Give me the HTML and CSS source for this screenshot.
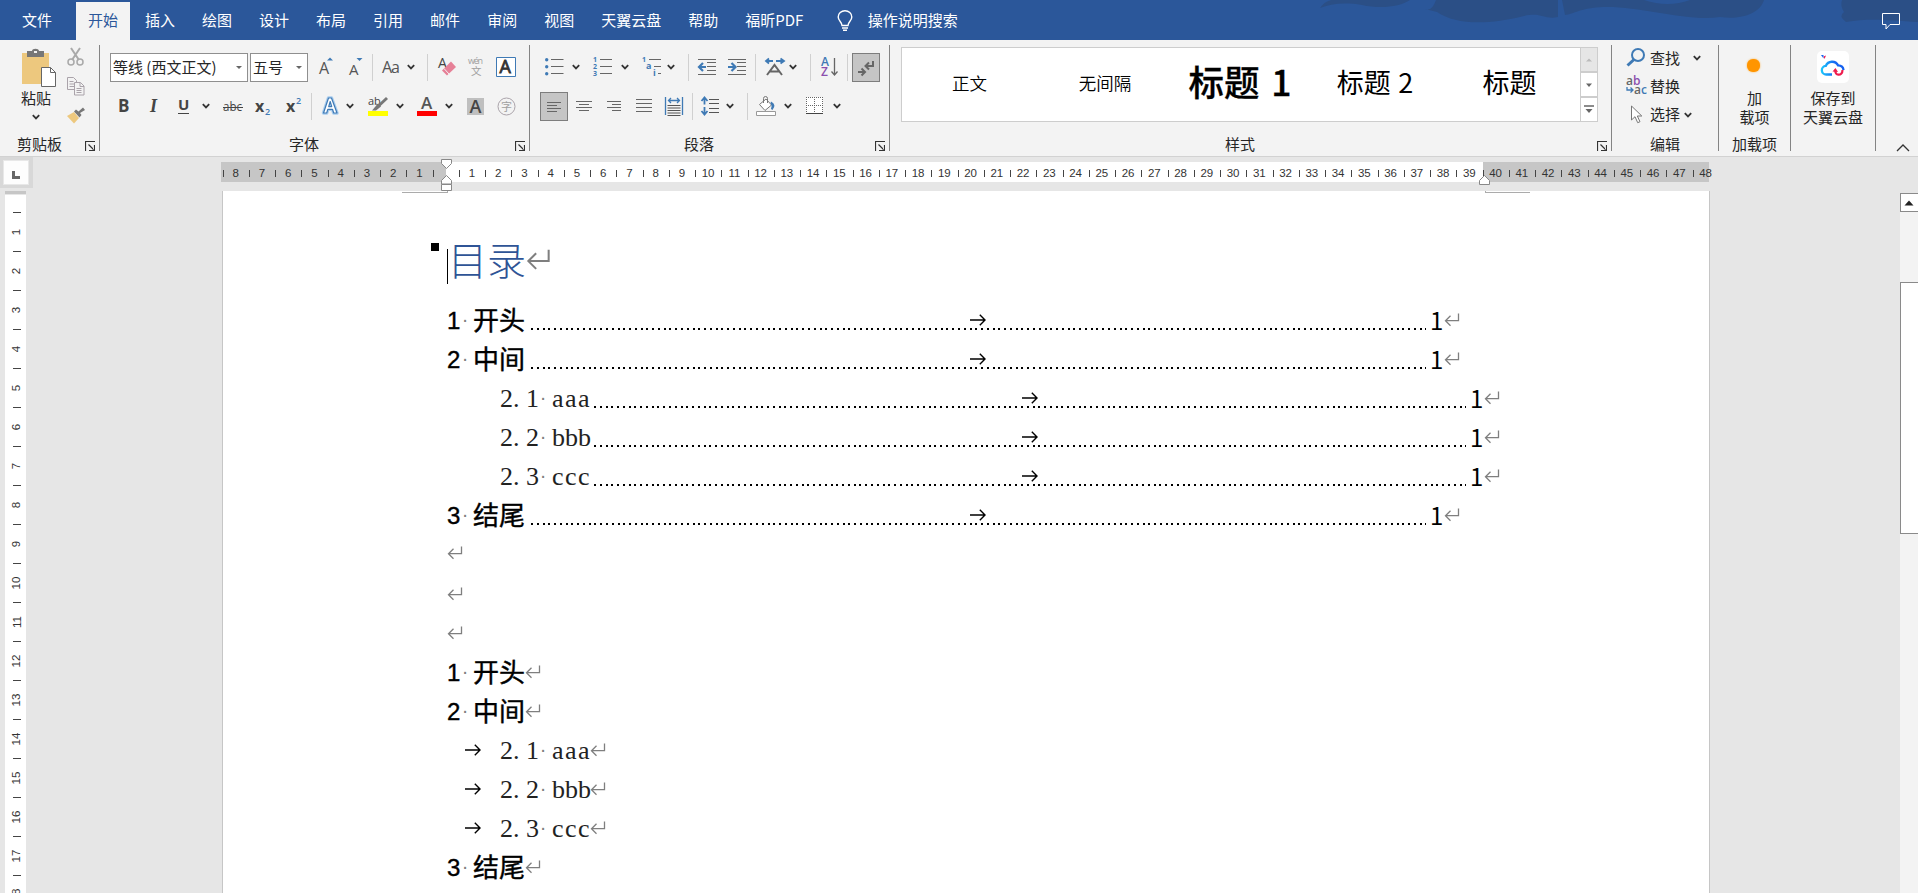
FILE: index.html
```html
<!DOCTYPE html>
<html lang="zh-CN">
<head>
    <meta charset="UTF-8">
    <meta name="viewport" content="width=device-width, initial-scale=1.0">
    <title>文档 - Word</title>
    <link rel="stylesheet" href="styles.css">
</head>
<body>
    <!-- Símbolos compartidos -->
    <svg class="defs" width="0" height="0">
        <symbol id="chev" viewBox="0 0 10 10"><path d="M1.8 3.2L5 6.4l3.2-3.2" fill="none" stroke="#333" stroke-width="1.8"/></symbol>
        <symbol id="launch" viewBox="0 0 10 10"><path d="M.5 10V.5H10M3.5 3.5L8.5 8.5M9.5 4v5.5H4" fill="none" stroke="#333" stroke-width="1.2"/></symbol>
        <symbol id="enter" viewBox="0 0 16 14"><path d="M14.5.5v7.2H1.5M6.5 2.7l-5 5 5 5" fill="none" stroke="#7f7f7f" stroke-width="1.3"/></symbol>
        <symbol id="tab" viewBox="0 0 16 12"><path d="M0 6h15M9.8 .8L15 6l-5.2 5.2" fill="none" stroke="#000" stroke-width="1.4"/></symbol>
    </svg>

    <header class="tabs">
        <svg class="brush" width="600" height="40" viewBox="0 0 600 40">
            <path d="M2 8C6 2 12 0 14 0H92C82 7 62 9 44 5C26 2 12 4 2 8Z"/>
            <path d="M118 0H240V17C226 20 224 12 206 16C170 25 138 25 119 12L107 9Q114 12 118 0Z"/>
            <path d="M244 0H446C442 14 422 20 402 17C370 22 322 6 286 7C262 8 256 14 247 15Z"/>
            <path d="M326 0H372Q350 8 326 0Z" class="light"/>
            <path d="M524 0H600V22C570 20 550 18 528 22Q520 16 526 12Q522 6 524 0Z"/>
        </svg>
        <a class="tab file">文件</a>
        <a class="tab active">开始</a>
        <a class="tab">插入</a>
        <a class="tab">绘图</a>
        <a class="tab">设计</a>
        <a class="tab">布局</a>
        <a class="tab">引用</a>
        <a class="tab">邮件</a>
        <a class="tab">审阅</a>
        <a class="tab">视图</a>
        <a class="tab">天翼云盘</a>
        <a class="tab">帮助</a>
        <a class="tab">福昕PDF</a>
        <svg class="bulb" width="16" height="22" viewBox="0 0 16 22" fill="none" stroke="#fff" stroke-width="1.4"><path d="M5 15.5C5 12 1.2 11 1.2 7a6.8 6.3 0 0 1 13.6 0c0 4-3.8 5-3.8 8.500zM5 18h6M6 20.300h4"/></svg>
        <span class="tell">操作说明搜索</span>
        <svg class="comment" width="18" height="17" viewBox="0 0 18 17"><path d="M.5.5h17v11H8l-4 4.500v-4.500H.5z" fill="none" stroke="#fff"/></svg>
    </header>

    <section class="ribbon">
        <!-- Portapapeles -->
        <div class="group clipboard">
            <div class="group-body">
                <div class="paste">
                    <svg width="34" height="39" viewBox="0 0 34 39">
                        <path d="M0 4h27v31H0z" fill="#edc87e"/>
                        <path d="M5 2h5c0-3 7-3 7 0h5v6H5z" fill="#777"/><path d="M12 2h3v2h-3z" fill="#f3f3f3"/>
                        <path d="M19.500 18.500h9l5 5v14h-14z" fill="#fff" stroke="#666"/><path d="M28.500 18.500v5h5" fill="none" stroke="#666"/>
                    </svg>
                    <span>粘贴</span>
                    <svg width="10" height="10"><use href="#chev"/></svg>
                </div>
                <div class="clip-tools">
                    <svg width="18" height="18" viewBox="0 0 18 18" fill="none" stroke="#a9a9a9"><path d="M4 0l8 12M13 0L5 12" stroke-width="2"/><circle cx="4" cy="14" r="3" stroke-width="1.500"/><circle cx="13" cy="14" r="3" stroke-width="1.500"/></svg>
                    <svg width="18" height="19" viewBox="0 0 18 19" fill="#f3f3f3" stroke="#aaa3aa"><path d="M.5.5h6l3 3v9h-9zM2.500 4.500h4M2.500 7h5M2.500 9.500h5"/><path d="M7.500 5.500h6l3.500 3.500v9H7.500zM13 5.500v4h4M9.500 11.500h5M9.500 13.500h5M9.500 15.500h5"/></svg>
                    <svg width="18" height="17" viewBox="0 0 18 17"><path d="M0 9l7-4 5 6-5 5.500z" fill="#edc87e"/><path d="M7 4.500L12.500 10.500l2-2.500-1.500-2L18 3l-2-2.500-4.500 4L9 2.500z" fill="#777"/></svg>
                </div>
            </div>
            <div class="label">剪贴板<svg width="10" height="10"><use href="#launch"/></svg></div>
        </div>

        <!-- Fuente -->
        <div class="group font">
            <div class="group-body rows">
                <div class="row font-a">
                    <div class="combo wide"><span>等线 (西文正文)</span><i></i></div>
                    <div class="combo"><span>五号</span><i></i></div>
                    <svg width="18" height="20" viewBox="0 0 18 20"><text x="0" y="17" font-size="16" font-weight="500" fill="#555">A</text><path d="M8 3.500h6L11 .5z" fill="#3f7ab5"/></svg>
                    <svg width="18" height="20" viewBox="0 0 18 20"><text x="1" y="18" font-size="15" font-weight="500" fill="#555">A</text><path d="M8.500 1h6L11.500 4z" fill="#3f7ab5"/></svg>
                    <b class="sep"></b>
                    <svg width="20" height="20" viewBox="0 0 20 20"><text x="-1" y="15.500" font-size="16" fill="#555" textLength="18">Aa</text></svg>
                    <svg width="10" height="10"><use href="#chev"/></svg>
                    <b class="sep"></b>
                    <svg width="20" height="20" viewBox="0 0 20 20"><text x="0" y="11" font-size="14" font-weight="500" fill="#444">A</text><path d="M4 13.500l9-9 5 5.500-9 8.500z" fill="#e68097"/><path d="M6 11.500l5 5.500" stroke="#f3f3f3"/></svg>
                    <svg width="18" height="20" viewBox="0 0 18 20" fill="#a0a0a0"><text x="0" y="7" font-size="9" textLength="15">wén</text><text x="3" y="18" font-size="10.500">文</text></svg>
                    <svg width="20" height="20" viewBox="0 0 20 20"><path d="M.5.5h19v19H.5z" fill="#fff" stroke="#3f7ab5"/><text x="3.500" y="16" font-size="18" fill="#333" stroke="#333" stroke-width=".8">A</text></svg>
                </div>
                <div class="row font-b">
                    <svg width="14" height="20" viewBox="0 0 14 20"><text x="0" y="16" font-size="17" font-weight="700" fill="#444">B</text></svg>
                    <svg width="14" height="20" viewBox="0 0 14 20"><text x="1" y="16" class="serif" font-size="18" font-weight="700" font-style="italic" fill="#444">I</text></svg>
                    <svg width="14" height="20" viewBox="0 0 14 20"><text x="0" y="14" font-size="15" font-weight="700" fill="#444">U</text><path d="M0 17.500h11" stroke="#444"/></svg>
                    <svg width="10" height="10"><use href="#chev"/></svg>
                    <svg width="20" height="20" viewBox="0 0 20 20"><text x="0" y="15" font-size="13" fill="#444" textLength="19" lengthAdjust="spacingAndGlyphs">abc</text><path d="M0 11.500h20" stroke="#444"/></svg>
                    <svg width="18" height="20" viewBox="0 0 18 20"><text x="0" y="16" font-size="16" font-weight="700" fill="#444">x</text><text x="10" y="19" font-size="9" font-weight="600" fill="#3f7ab5">2</text></svg>
                    <svg width="18" height="20" viewBox="0 0 18 20"><text x="0" y="16" font-size="16" font-weight="700" fill="#444">x</text><text x="10" y="8" font-size="9" font-weight="600" fill="#3f7ab5">2</text></svg>
                    <b class="sep"></b>
                    <svg width="18" height="20" viewBox="0 0 18 20" fill="none" stroke-linejoin="round"><path d="M1.500 17L6.500 2h3L15 17h-3.300l-1.200-3.700H5.800L4.700 17zM6.700 10.600h3L8.200 5.500z" stroke="#a9cdee" stroke-width="3.500"/><path d="M1.500 17L6.500 2h3L15 17h-3.300l-1.200-3.700H5.800L4.700 17zM6.700 10.600h3L8.200 5.500z" fill="#fff" fill-rule="evenodd" stroke="#3f7ab5" stroke-width="1.200"/></svg>
                    <svg width="10" height="10"><use href="#chev"/></svg>
                    <svg width="20" height="20" viewBox="0 0 20 20"><text x="0" y="8.500" font-size="11" font-weight="500" fill="#444">ab</text><path d="M19 2l-8.500 8" stroke="#777" stroke-width="3"/><path d="M10 7.500l3 3-5 4H4z" fill="#777"/><path d="M0 15h20v5H0z" fill="#ff0"/></svg>
                    <svg width="10" height="10"><use href="#chev"/></svg>
                    <svg width="20" height="20" viewBox="0 0 20 20"><text x="4" y="13" font-size="17" font-weight="600" fill="#555">A</text><path d="M0 15h20v5H0z" fill="red"/></svg>
                    <svg width="10" height="10"><use href="#chev"/></svg>
                    <svg width="17" height="17" viewBox="0 0 17 17"><path d="M0 0h17v17H0z" fill="#bfbfbf"/><text x="2.500" y="14.500" font-size="18" font-weight="600" fill="#444">A</text></svg>
                    <svg width="19" height="19" viewBox="0 0 19 19"><circle cx="9.500" cy="9.500" r="8.500" fill="none" stroke="#aaa3aa"/><text x="4" y="13.500" font-size="11" fill="#a0a0a0">字</text></svg>
                </div>
            </div>
            <div class="label">字体<svg width="10" height="10"><use href="#launch"/></svg></div>
        </div>

        <!-- Párrafo -->
        <div class="group paragraph">
            <div class="group-body rows">
                <div class="row para-a">
                    <svg width="19" height="18" viewBox="0 0 19 18"><path d="M6 1.500h12.500M6 8.500h12.500M6 15.500h12.500" stroke="#666"/><g fill="#3f7ab5"><circle cx="1.700" cy="1.700" r="1.700"/><circle cx="1.700" cy="8.700" r="1.700"/><circle cx="1.700" cy="15.700" r="1.700"/></g></svg>
                    <svg width="10" height="10"><use href="#chev"/></svg>
                    <svg width="20" height="20" viewBox="0 0 20 20"><path d="M7 2.500h12M7 9.500h12M7 16.500h12" stroke="#666"/><g fill="#3f7ab5" font-size="7" font-weight="700"><text y="5">1</text><text y="12">2</text><text y="19">3</text></g></svg>
                    <svg width="10" height="10"><use href="#chev"/></svg>
                    <svg width="20" height="20" viewBox="0 0 20 20"><path d="M7 2.500h12M12 9.500h7M16 16.500h3" stroke="#666"/><g fill="#3f7ab5" font-weight="700"><text y="5" font-size="7">1</text><text x="4" y="12" font-size="9">a</text><text x="11" y="19" font-size="9">i</text></g></svg>
                    <svg width="10" height="10"><use href="#chev"/></svg>
                    <b class="sep"></b>
                    <svg width="20" height="18" viewBox="0 0 20 18"><path d="M1 1.500h18M10 4.500h9M10 8.500h9M10 12.500h9M1 16.500h18" stroke="#666"/><path d="M9 9H2.500M6 5L2 9l4 4" fill="none" stroke="#3f7ab5" stroke-width="2.200"/></svg>
                    <svg width="20" height="18" viewBox="0 0 20 18"><path d="M1 1.500h18M10 4.500h9M10 8.500h9M10 12.500h9M1 16.500h18" stroke="#666"/><path d="M1 9h6.500M4.500 5l4 4-4 4" fill="none" stroke="#3f7ab5" stroke-width="2.200"/></svg>
                    <b class="sep"></b>
                    <svg width="20" height="18" viewBox="0 0 20 18"><path d="M2 17L9.500 7 17 17M5 13.500h9" fill="none" stroke="#666" stroke-width="2"/><path d="M1 3h7M11 3h7.500M4 .5L1 3l3 2.500M15.500 .5L19 3l-3.500 2.500" fill="none" stroke="#3f7ab5" stroke-width="1.800"/></svg>
                    <svg width="10" height="10"><use href="#chev"/></svg>
                    <b class="sep"></b>
                    <svg width="18" height="20" viewBox="0 0 18 20"><text x="0" y="9" font-size="12" font-weight="600" fill="#3f7ab5">A</text><text x="0" y="19" font-size="12" font-weight="600" fill="#8b4fae">Z</text><path d="M13.500 1v17M10.500 14.500l3 3.500 3-3.500" fill="none" stroke="#666" stroke-width="1.300"/></svg>
                    <b class="sep"></b>
                    <span class="pressed"><svg width="18" height="16" viewBox="0 0 18 16" fill="none" stroke="#666" stroke-width="2"><path d="M16 1v5H9.500M12 2.500L8.500 6 12 9.500M1 12h6M4.500 8.500L8 12l-3.500 3.500"/></svg></span>
                </div>
                <div class="row para-b">
                    <span class="pressed"><svg width="16" height="14" viewBox="0 0 16 14"><path d="M1 2.500h14M1 5.500h10M1 8.500h14M1 11.500h10" stroke="#666"/></svg></span>
                    <svg width="16" height="14" viewBox="0 0 16 14"><path d="M0 2.500h16M3 5.500h10M0 8.500h16M3 11.500h10" stroke="#666"/></svg>
                    <svg width="16" height="14" viewBox="0 0 16 14"><path d="M0 2.500h14M5 5.500h9M0 8.500h14M5 11.500h9" stroke="#666"/></svg>
                    <svg width="16" height="14" viewBox="0 0 16 14"><path d="M0 .5h16M0 4.500h16M0 8.500h16M0 12.500h16" stroke="#666"/></svg>
                    <svg width="18" height="20" viewBox="0 0 18 20"><path d="M.5 1v18M17.500 1v18M4 4.500h10M6 2L3.500 4.500 6 7M12 2l2.500 2.500L12 7" fill="none" stroke="#3f7ab5" stroke-width="1.300"/><path d="M2.500 9.500h13M2.500 12h13M2.500 14.500h13M2.500 17h13M2.500 19.500h13" stroke="#555"/></svg>
                    <b class="sep"></b>
                    <svg width="18" height="20" viewBox="0 0 18 20"><path d="M8 3.500h10M8 7.500h10M8 12.500h10M8 16.500h10" stroke="#555"/><path d="M3.500 1.500v7M.5 5L3.500 1.500 6.500 5M3.500 11v7.500M.5 15l3 3.500 3-3.500" fill="none" stroke="#3f7ab5" stroke-width="1.800"/></svg>
                    <svg width="10" height="10"><use href="#chev"/></svg>
                    <b class="sep"></b>
                    <svg width="20" height="20" viewBox="0 0 20 20"><path d="M3.500 8.500L10 3l5.500 6-6.500 5.500z" fill="#fff" stroke="#777"/><path d="M7.500 7V2.500q0-2 2-2t2 2V7" fill="none" stroke="#777"/><path d="M15 5.500q6 3 1.500 8.500l-1.500-1q1.500-3-.500-6z" fill="#3f7ab5"/><path d="M.5 15.500h19v4H.5z" fill="#fff" stroke="#999"/></svg>
                    <svg width="10" height="10"><use href="#chev"/></svg>
                    <svg width="18" height="18" viewBox="0 0 18 18"><path d="M0 0h17v17H0z" fill="#fff"/><path d="M0 .5h17M.5 0v17M8.500 0v17M16.500 0v17M0 8.500h17" fill="none" stroke="#666" stroke-dasharray="1 1"/><path d="M0 16.500h17" stroke="#444"/></svg>
                    <svg width="10" height="10"><use href="#chev"/></svg>
                </div>
            </div>
            <div class="label">段落<svg width="10" height="10"><use href="#launch"/></svg></div>
        </div>

        <!-- Estilos -->
        <div class="group styles">
            <div class="group-body">
                <div class="gallery">
                    <span class="st-normal">正文</span>
                    <span class="st-normal">无间隔</span>
                    <span class="st-h1">标题 1</span>
                    <span class="st-h2">标题 2</span>
                    <span class="st-h2">标题</span>
                </div>
                <div class="gallery-nav">
                    <span class="off"><svg width="8" height="4"><path d="M1 3.500h6L4 .5z" fill="#bbb"/></svg></span>
                    <span><svg width="8" height="4"><path d="M1 .5h6L4 4z" fill="#666"/></svg></span>
                    <span><svg width="10" height="9"><path d="M0 1h10" stroke="#666" stroke-width="1.500"/><path d="M1.500 4h7L5 8z" fill="#666"/></svg></span>
                </div>
            </div>
            <div class="label">样式<svg width="10" height="10"><use href="#launch"/></svg></div>
        </div>

        <!-- Edición -->
        <div class="group editing">
            <div class="group-body">
                <div class="edit-row">
                    <svg width="20" height="20" viewBox="0 0 20 20" fill="none" stroke="#3f7ab5"><circle cx="12" cy="7" r="6" stroke-width="2"/><path d="M8 11.500L1.500 17.500" stroke-width="3"/></svg>
                    <span>查找</span><svg class="far" width="10" height="10"><use href="#chev"/></svg>
                </div>
                <div class="edit-row">
                    <svg width="20" height="20" viewBox="0 0 20 20" font-size="12" font-weight="600"><text y="8.500" fill="#666">a<tspan fill="#8b4fae">b</tspan></text><text x="8" y="18" fill="#666">a<tspan fill="#3f7ab5">c</tspan></text><path d="M1 11v3h6M4.500 11.500L7 14 4.500 16.500" fill="none" stroke="#3f7ab5" stroke-width="1.300"/></svg>
                    <span>替换</span>
                </div>
                <div class="edit-row">
                    <svg width="20" height="20" viewBox="0 0 20 20"><path d="M5.500 1v14l3.500-3.300 2.700 6 2.300-1-2.700-5.700h4.500z" fill="#fff" stroke="#777"/></svg>
                    <span>选择</span><svg width="10" height="10"><use href="#chev"/></svg>
                </div>
            </div>
            <div class="label plain">编辑</div>
        </div>

        <div class="group addins">
            <div class="group-body tall">
                <span class="icon-slot"><i class="sun"></i></span>
                <span>加<br>载项</span>
            </div>
            <div class="label plain">加载项</div>
        </div>

        <div class="group cloud">
            <div class="group-body tall">
                <svg width="32" height="32" viewBox="0 0 32 32">
                    <defs><linearGradient id="cg"><stop offset="0" stop-color="#1cc3fb"/><stop offset=".6" stop-color="#1667f2"/><stop offset="1" stop-color="#1560ef"/></linearGradient></defs>
                    <rect width="32" height="32" rx="5" fill="#fff"/>
                    <path d="M15 23.500H9.500a4.300 4.300 0 0 1-.7-8.600a6.800 6.800 0 0 1 12.300-.5q5 .3 5.400 4.600" fill="none" stroke="url(#cg)" stroke-width="2.300"/>
                    <path d="M18.500 19c-1.500 5.500 7 7 7 0" fill="none" stroke="#ee1c4e" stroke-width="2.200"/><path d="M15.500 20.500l3-3.500 2.500 4z" fill="#ee1c4e"/>
                    <path d="M4 4h2.500v3.500z" fill="#1667f2"/><path d="M6.500 5.500L9 4.500 7.500 8z" fill="#ee1c4e"/>
                </svg>
                <span>保存到<br>天翼云盘</span>
            </div>
        </div>
        <svg class="collapse" width="14" height="8" viewBox="0 0 14 8"><path d="M1 7l6-6 6 6" fill="none" stroke="#333" stroke-width="1.300"/></svg>
    </section>

    <div class="ruler-bar">
        <div class="corner"><span><svg width="8" height="8"><path d="M0 0h3v5h5v3H0z" fill="#666"/></svg></span></div>
        <div class="ruler">
            <div class="ticks" id="ticksX"></div>
            <svg class="mark left" width="12" height="34" viewBox="0 0 12 34" fill="#fff" stroke="#888"><path d="M.5.5h10v4L5.500 9.500l-5-5zM5.500 16.500l5 5v3.500H.5v-3.500zM.5 25.500h10v6H.5z"/></svg>
            <svg class="mark right" width="12" height="11" viewBox="0 0 12 11" fill="#fff" stroke="#888"><path d="M5.500 .5l5 5v4H.5v-4z"/></svg>
        </div>
    </div>

    <main class="workspace">
        <div class="v-ruler" id="ticksY"></div>
        <article class="page">
            <div class="crops"><i class="crop-l"></i><i class="crop-r"></i></div>
            <h1 class="title"><i class="bullet"></i><i class="caret"></i>目录<svg width="25" height="22"><use href="#enter"/></svg></h1>

            <!-- Tabla de contenido -->
            <p class="line toc"><b>1</b><u>·</u><strong>开头</strong><span class="leader"><svg width="16" height="12"><use href="#tab"/></svg></span><em>1</em><svg width="16" height="14"><use href="#enter"/></svg></p>
            <p class="line toc"><b>2</b><u>·</u><strong>中间</strong><span class="leader"><svg width="16" height="12"><use href="#tab"/></svg></span><em>1</em><svg width="16" height="14"><use href="#enter"/></svg></p>
            <p class="line toc sub"><s>2</s><s>.</s><s>1</s><u>·</u><s>a</s><s>a</s><s>a</s><span class="leader"><svg width="16" height="12"><use href="#tab"/></svg></span><em>1</em><svg width="16" height="14"><use href="#enter"/></svg></p>
            <p class="line toc sub"><s>2</s><s>.</s><s>2</s><u>·</u><s>b</s><s>b</s><s>b</s><span class="leader"><svg width="16" height="12"><use href="#tab"/></svg></span><em>1</em><svg width="16" height="14"><use href="#enter"/></svg></p>
            <p class="line toc sub"><s>2</s><s>.</s><s>3</s><u>·</u><s>c</s><s>c</s><s>c</s><span class="leader"><svg width="16" height="12"><use href="#tab"/></svg></span><em>1</em><svg width="16" height="14"><use href="#enter"/></svg></p>
            <p class="line toc"><b>3</b><u>·</u><strong>结尾</strong><span class="leader"><svg width="16" height="12"><use href="#tab"/></svg></span><em>1</em><svg width="16" height="14"><use href="#enter"/></svg></p>

            <p class="line after-toc"><svg width="16" height="14"><use href="#enter"/></svg></p>
            <p class="line"><svg width="16" height="14"><use href="#enter"/></svg></p>
            <p class="line"><svg width="16" height="14"><use href="#enter"/></svg></p>

            <!-- Cuerpo -->
            <p class="line"><b>1</b><u>·</u><strong>开头</strong><svg width="16" height="14"><use href="#enter"/></svg></p>
            <p class="line"><b>2</b><u>·</u><strong>中间</strong><svg width="16" height="14"><use href="#enter"/></svg></p>
            <p class="line tabbed"><svg width="16" height="12"><use href="#tab"/></svg><s>2</s><s>.</s><s>1</s><u>·</u><s>a</s><s>a</s><s>a</s><svg width="16" height="14"><use href="#enter"/></svg></p>
            <p class="line tabbed"><svg width="16" height="12"><use href="#tab"/></svg><s>2</s><s>.</s><s>2</s><u>·</u><s>b</s><s>b</s><s>b</s><svg width="16" height="14"><use href="#enter"/></svg></p>
            <p class="line tabbed"><svg width="16" height="12"><use href="#tab"/></svg><s>2</s><s>.</s><s>3</s><u>·</u><s>c</s><s>c</s><s>c</s><svg width="16" height="14"><use href="#enter"/></svg></p>
            <p class="line"><b>3</b><u>·</u><strong>结尾</strong><svg width="16" height="14"><use href="#enter"/></svg></p>
        </article>
        <div class="scrollbar">
            <span class="up"><svg width="10" height="6"><path d="M.5 5.500h9L5 .5z" fill="#222"/></svg></span>
            <span class="thumb"></span>
        </div>
    </main>

    <script>
        // Números de las reglas
        function crearRegla(id, desde, hasta) {
            const regla = document.getElementById(id);
            for (let n = desde; n <= hasta; n++) {
                const celda = document.createElement('span');
                // el origen no lleva número, solo la marca
                if (n !== 0) {
                    const numero = document.createElement('i');
                    numero.textContent = Math.abs(n);
                    celda.appendChild(numero);
                }
                regla.appendChild(celda);
            }
        }

        crearRegla('ticksX', -8, 48);
        crearRegla('ticksY', 1, 18);
    </script>
</body>
</html>
```

FILE: styles.css
```css
* {
    box-sizing: border-box;
}

body {
    margin: 0;
    height: 893px;
    overflow: hidden;
    background-color: #e6e6e6;
    font-family: "Noto Sans CJK SC", sans-serif;
    font-size: 15px;
    color: #262626;
}

svg {
    display: block;
    flex: none;
    overflow: visible;
}

svg text {
    font-family: "Open Sans", "Noto Sans CJK SC", sans-serif;
}

svg text.serif {
    font-family: "Liberation Serif", serif;
}

.defs {
    position: absolute;
}

/* Pestañas */
.tabs {
    position: relative;
    display: flex;
    align-items: center;
    height: 40px;
    padding-left: 8.5px;
    background-color: #2b579a;
    color: #fff;
}

.brush {
    position: absolute;
    right: 0;
    top: 0;
    fill: #2b4f86;
}

.brush .light {
    fill: #2b579a;
}

.tab {
    height: 38px;
    margin: 2px 1.5px 0;
    padding: 0 12px;
    line-height: 35px;
    white-space: nowrap;
}

.tab.file {
    margin-right: 10.5px;
}

.tab.active {
    background-color: #f3f3f3;
    color: #2b579a;
}

.bulb {
    margin: 2px 15px 0 20px;
}

.tell {
    line-height: 37px;
    margin-top: -1px;
}

.comment {
    position: relative;
    margin: 3px 18px 0 auto;
}

/* Cinta */
.ribbon {
    display: flex;
    height: 117px;
    padding-top: 5px;
    background-color: #f3f3f3;
    border-bottom: 1px solid #d2d2d2;
}

.group {
    height: 106px;
    border-right: 1px solid #848484;
    display: flex;
    flex-direction: column;
}

.clipboard { width: 100px; }
.font { width: 430px; }
.paragraph { width: 360px; }
.styles { width: 722px; }
.editing { width: 107px; }
.addins { width: 72px; }
.cloud { width: 85px; }

.group-body {
    display: flex;
    height: 88px;
}

.label {
    display: flex;
    align-items: flex-start;
    height: 18px;
    line-height: 22px;
}

.label svg {
    margin: 8px 4px 0 auto;
}

.clipboard .label { padding-left: 17px; }
.font .label { padding-left: 189px; }
.paragraph .label { padding-left: 154px; }
.styles .label { padding-left: 335px; }

.label.plain {
    justify-content: center;
}

.paste {
    display: flex;
    flex-direction: column;
    align-items: center;
    width: 34px;
    margin: 4px 12px 0 19px;
    line-height: 20px;
}

.paste > svg:first-child {
    margin-left: 5px;
}

.paste > svg:last-child {
    margin-top: 4px;
}

.clip-tools {
    display: flex;
    flex-direction: column;
    gap: 11px;
    padding: 3px 0 0 2px;
}

.rows {
    flex-direction: column;
    gap: 10px;
    padding-top: 8px;
}

.row {
    display: grid;
    align-items: center;
    height: 29px;
}

.row > svg {
    margin-top: -1px;
}

.font-a {
    margin-left: 10px;
    grid-template-columns: 140px 69px 29px 24px 11px 23px 21px 11px 30px 28px 20px;
}

.font-b {
    margin-left: 18px;
    grid-template-columns: 31px 29px 23px 22px 32px 31px 25px 11px 23px 23px 27px 22px 27px 23px 30px 20px;
}

.para-a {
    margin-left: 15px;
    grid-template-columns: 26px 22px 27px 22px 24px 22px 9px 30px 28px 10px 23px 22px 11px 26px 5px 28px;
}

.para-b {
    margin-left: 10px;
    grid-template-columns: 36px 31px 29px 29px 27px 9px 24px 22px 9px 27px 23px 26px 10px;
}

.sep {
    width: 1px;
    height: 27px;
    background-color: #d0d0d0;
}

.combo {
    display: flex;
    align-items: center;
    justify-content: space-between;
    width: 58px;
    height: 29px;
    padding: 0 5px 0 2px;
    background-color: #fff;
    border: 1px solid #8f8f8f;
    white-space: nowrap;
}

.combo.wide {
    width: 138px;
}

.combo span {
    margin-top: -3px;
}

.combo i {
    border: 3.5px solid transparent;
    border-top-color: #666;
    border-bottom: none;
}

.pressed {
    display: flex;
    align-items: center;
    justify-content: center;
    width: 28px;
    height: 29px;
    background-color: #c5c5c5;
    border: 1px solid #7d7d7d;
}

/* Galería de estilos */
.styles .group-body {
    padding: 2px 0 0 11px;
}

.gallery {
    display: grid;
    grid-template-columns: 135px 136px 134px 136px 133px;
    align-items: center;
    justify-items: center;
    width: 679px;
    height: 75px;
    padding-bottom: 5px;
    background-color: #fff;
    border: 1px solid #cdcdcd;
    border-right: none;
    color: #000;
    white-space: nowrap;
}

.st-normal {
    font-size: 17.5px;
    font-weight: 350;
}

.st-h1 {
    margin-bottom: 4px;
    font-size: 35.5px;
    font-weight: 500;
    word-spacing: 4px;
    -webkit-text-stroke: 0.3px #000;
}

.st-h2 {
    margin-bottom: 1px;
    font-size: 27px;
    word-spacing: 1.5px;
}

.gallery-nav {
    width: 18px;
    height: 75px;
}

.gallery-nav span {
    display: flex;
    align-items: center;
    justify-content: center;
    height: 25px;
    background-color: #fff;
    border: 1px solid #cdcdcd;
}

.gallery-nav .off {
    background-color: #e6e6e6;
}

.editing .group-body {
    flex-direction: column;
    padding: 3px 0 0 14px;
}

.edit-row {
    display: flex;
    align-items: center;
    height: 29px;
    margin-top: -4px;
    margin-bottom: 4px;
}

.edit-row span {
    margin: -1px 3px 0 4px;
    line-height: 22px;
}

.edit-row .far {
    margin-left: 9px;
}

.tall {
    flex-direction: column;
    align-items: center;
    padding-top: 6px;
    text-align: center;
    line-height: 19px;
}

.tall > span:last-child {
    margin-top: 5px;
}

.icon-slot {
    display: flex;
    align-items: center;
    justify-content: center;
    width: 32px;
    height: 32px;
}

.sun {
    width: 13px;
    height: 13px;
    margin: -3px 3px 0 0;
    border-radius: 6px;
    background-color: #ff9500;
    box-shadow: 0 0 2px #ffae3d;
}

.collapse {
    margin: 99px 8px 0 auto;
}

/* Reglas */
.ruler-bar {
    display: flex;
    height: 34px;
}

.corner {
    width: 33px;
    height: 31px;
    padding: 3px 4px 3px 3px;
    background-color: #d8d8d8;
}

.corner span {
    display: flex;
    width: 26px;
    height: 25px;
    padding: 10px 0 0 8px;
    background-color: #fdfdfd;
    border: 1px solid #e8e8e8;
}

.ruler {
    position: relative;
    width: 1488px;
    height: 20px;
    margin: 5px 0 0 188px;
    background: linear-gradient(90deg, #c6c6c6 225px, #fff 225px 1262px, #c6c6c6 1262px);
}

.ticks {
    display: flex;
    width: 1500px;
    padding-left: 1.5px;
}

.ticks span {
    flex: none;
    width: 26.25px;
    height: 20px;
    text-align: center;
    background: linear-gradient(#444, #444) no-repeat 0 8px / 1px 7px;
}

.ticks i,
.v-ruler i {
    display: block;
    font: normal 11.5px/22px "Liberation Sans", Arial, sans-serif;
    color: #333;
}

.mark {
    position: absolute;
}

.mark.left {
    left: 220px;
    top: -3px;
}

.mark.right {
    left: 1258px;
    top: 13px;
}

.workspace {
    display: flex;
    height: 702px;
}

.v-ruler {
    width: 21px;
    height: 702px;
    margin-left: 5px;
    padding-top: 21px;
    overflow: hidden;
    background: linear-gradient(#c6c6c6 3px, #e6e6e6 3px 4px, #fff 4px);
}

.v-ruler span {
    display: flex;
    align-items: center;
    justify-content: center;
    height: 39px;
    background: linear-gradient(#444, #444) no-repeat 8px 0 / 8px 1px;
}

.v-ruler i {
    transform: rotate(-90deg);
    margin-left: 2px;
}

/* Documento */
.page {
    width: 1488px;
    height: 702px;
    margin-left: 196px;
    padding-left: 224px;
    overflow: hidden;
    background-color: #fff;
    border-left: 1px solid #c6c6c6;
    border-right: 1px solid #c6c6c6;
    color: #000;
}

.crops {
    display: flex;
    height: 2px;
    margin-left: -45px;
}

.crops i {
    width: 46px;
    border-bottom: 1px solid #ababab;
}

.crop-l {
    border-right: 1px solid #ababab;
}

.crops .crop-r {
    width: 45px;
    margin-left: 1037px;
    border-left: 1px solid #ababab;
}

.title {
    position: relative;
    display: flex;
    margin: 40px 0 0;
    height: 67px;
    padding-left: 1px;
    font-size: 39px;
    font-weight: 300;
    line-height: 51px;
    color: #2f5496;
}

.title svg {
    margin: 16px 0 0 0;
}

.bullet {
    position: absolute;
    left: -16px;
    top: 10px;
    width: 8px;
    height: 8px;
    background-color: #000;
}

.caret {
    position: absolute;
    left: 0;
    top: 16px;
    width: 1px;
    height: 35px;
    background-color: #000;
}

.line {
    display: flex;
    align-items: center;
    height: 39px;
    margin: 0;
    font-size: 26px;
    line-height: 39px;
}

.line svg {
    margin-top: 1px;
}

.after-toc {
    margin: -1px 0 2px;
}

.line b,
.line u,
.line s,
.line em {
    flex: none;
    width: 13px;
    font-style: normal;
    font-weight: 400;
    text-decoration: none;
}

.line b {
    font: 24px/39px "Liberation Sans", sans-serif;
    -webkit-text-stroke: 0.4px #000;
    padding-top: 1px;
}

.line s {
    font: 26px/39px "Liberation Serif", serif;
    padding: 2px 0 0 1px;
    color: #222;
}

.line u {
    font: 20px/39px "Liberation Sans", sans-serif;
    color: #7f7f7f;
    text-align: center;
    text-indent: -3px;
}

.line strong {
    width: 52px;
    padding-bottom: 2px;
    font-weight: 400;
    -webkit-text-stroke: 0.4px #000;
}

.line em {
    font-weight: 400;
    font-size: 24px;
    margin-right: 1px;
    padding-bottom: 1px;
}

.toc {
    width: 1013px;
}

.toc.sub {
    width: 1053px;
}

.sub {
    padding-left: 52px;
}

.leader {
    display: flex;
    align-items: center;
    flex: 1;
    height: 39px;
    margin: 0 4px 0 6px;
    padding-right: 2px;
    justify-content: center;
    background: repeating-linear-gradient(90deg, #000 0 2px, transparent 2px 5.77px) no-repeat 0 28px / 100% 2px;
}

.sub .leader {
    margin-left: 4px;
    padding-right: 0;
}

.tabbed {
    padding-left: 18px;
}

.tabbed > svg:first-child {
    margin-right: 18px;
}

/* Barra de desplazamiento */
.scrollbar {
    width: 18px;
    height: 700px;
    margin: 2px 0 0 auto;
    background-color: #f3f3f3;
}

.scrollbar span {
    display: flex;
    align-items: center;
    justify-content: center;
    padding-right: 1px;
    background-color: #fff;
    border: 1px solid #8a8a8a;
    border-right: none;
}

.up {
    height: 19px;
}

.thumb {
    height: 252px;
    margin-top: 70px;
}
```
